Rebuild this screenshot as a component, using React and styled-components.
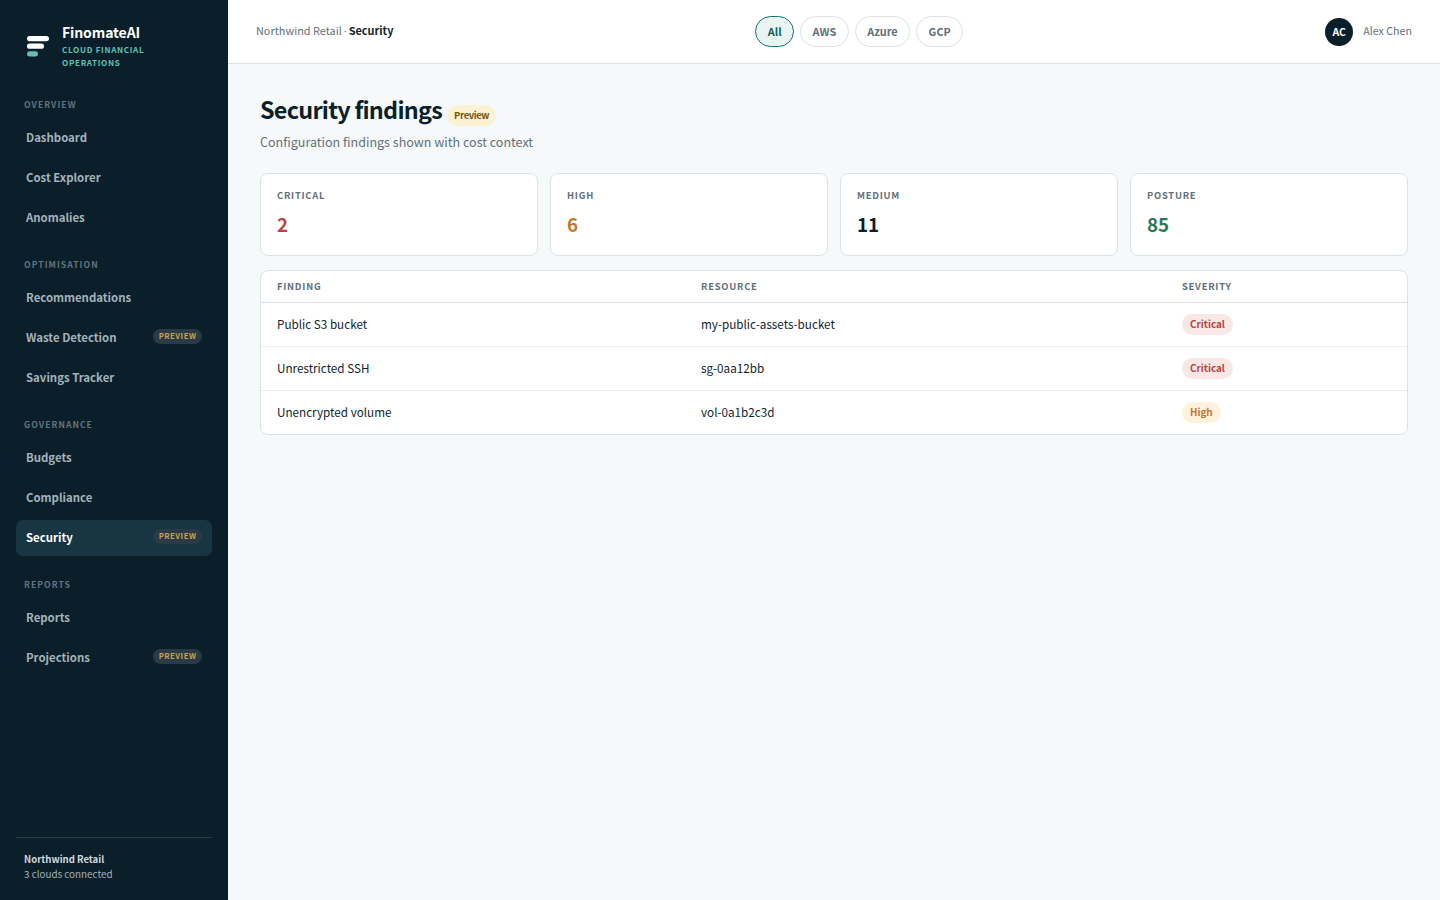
import React from "react";
import styled, { createGlobalStyle } from "styled-components";

const FONT = `"Noto Sans CJK SC", "Noto Sans", sans-serif`;

const GlobalStyle = createGlobalStyle`
  html, body {
    margin: 0;
    padding: 0;
    height: 100%;
    background: #f6f9fa;
    font-family: ${FONT};
  }
  * {
    box-sizing: border-box;
  }
`;

const Shell = styled.div`
  display: flex;
  width: 100%;
  height: 100vh;
  overflow: hidden;
`;

const Sidebar = styled.aside`
  width: 228px;
  flex: none;
  background: #0b1f2a;
  display: flex;
  flex-direction: column;
  padding: 0 16px;
`;

const Brand = styled.div`
  display: flex;
  align-items: center;
  gap: 12px;
  padding: 14px 0 0 10px;
  height: 78px;
`;

const BrandName = styled.div`
  font-size: 14px;
  line-height: 18px;
  font-weight: 700;
  letter-spacing: -0.1px;
  color: #ffffff;
`;

const BrandTag = styled.div`
  margin-top: 2px;
  font-size: 8.1px;
  line-height: 13px;
  font-weight: 700;
  letter-spacing: 0.68px;
  color: #5ec4b4;
  width: 110px;
`;

const Nav = styled.nav`
  flex: 1;
`;

const SectionLabel = styled.div`
  height: 16px;
  margin: ${({ $first }) => ($first ? "18px" : "20px")} 0 8px 8px;
  font-size: 8.6px;
  line-height: 16px;
  font-weight: 700;
  letter-spacing: 1.05px;
  color: #62757f;
`;

const NavItem = styled.a`
  display: flex;
  align-items: center;
  justify-content: space-between;
  height: 36px;
  margin-bottom: 4px;
  padding: 0 10px 2px;
  border-radius: 7px;
  font-size: 11.4px;
  font-weight: 700;
  color: ${({ $active }) => ($active ? "#ffffff" : "#a3b3bb")};
  background: ${({ $active }) => ($active ? "#173543" : "transparent")};
`;

const NavPreview = styled.span`
  height: 15px;
  margin-bottom: 1px;
  padding: 0 5.5px;
  border-radius: 8px;
  background: #2a3b45;
  font-size: 7.65px;
  line-height: 14px;
  font-weight: 700;
  letter-spacing: 0.55px;
  color: #c9a352;
`;

const Footer = styled.div`
  border-top: 1px solid #2b3c46;
  padding: 14px 8px 18px;
  font-size: 9.85px;
  line-height: 15px;
  color: #a3b3bb;
`;

const FooterName = styled.div`
  font-size: 9.55px;
  font-weight: 700;
  color: #cfd9dd;
`;

const Main = styled.div`
  flex: 1;
  min-width: 0;
  display: flex;
  flex-direction: column;
`;

const Topbar = styled.header`
  height: 64px;
  flex: none;
  display: flex;
  justify-content: space-between;
  align-items: center;
  padding: 0 28px;
  background: #ffffff;
  border-bottom: 1px solid #d9e3e5;
`;

const Breadcrumb = styled.div`
  padding-bottom: 3px;
  font-size: 10.9px;
  color: #5f717b;

  strong {
    font-weight: 700;
    color: #0f2430;
  }
`;

const Dot = styled.span`
  margin: 0 2px;
  font-family: "Noto Sans", sans-serif;
`;

const Pills = styled.div`
  display: flex;
  gap: 6px;
`;

const Pill = styled.button`
  height: 31px;
  padding: 0 11.5px 2px;
  border-radius: 16px;
  border: 1px solid ${({ $active }) => ($active ? "#0f766e" : "#d9e3e5")};
  background: ${({ $active }) => ($active ? "#e9f4f2" : "#ffffff")};
  color: ${({ $active }) => ($active ? "#0f5f5a" : "#5f717b")};
  font-family: ${FONT};
  font-size: 10.9px;
  font-weight: 700;
`;

const User = styled.div`
  display: flex;
  align-items: center;
  justify-content: flex-end;
  gap: 10px;
  font-size: 10.7px;
  color: #5f717b;
`;

const UserName = styled.span`
  margin-bottom: 2px;
`;

const Avatar = styled.div`
  width: 28px;
  height: 28px;
  padding-bottom: 1px;
  border-radius: 50%;
  background: #0b1f2a;
  display: flex;
  align-items: center;
  justify-content: center;
  color: #ffffff;
  font-size: 10.5px;
  font-weight: 700;
`;

const Content = styled.main`
  flex: 1;
  padding: 28px 32px;
`;

const TitleRow = styled.div`
  display: flex;
  align-items: center;
  gap: 5px;
`;

const Title = styled.h1`
  margin: 0;
  font-size: 23.4px;
  line-height: 34px;
  font-weight: 700;
  letter-spacing: -0.75px;
  color: #0b1f2a;
`;

const TitleBadge = styled.span`
  margin-top: 13px;
  height: 21px;
  padding: 0 7px;
  border-radius: 11px;
  background: #fdf1d3;
  font-size: 9.5px;
  line-height: 20px;
  font-weight: 700;
  letter-spacing: -0.4px;
  color: #7a5310;
`;

const Subtitle = styled.p`
  margin: 6px 0 0;
  font-size: 12.54px;
  line-height: 20px;
  color: #5f717b;
`;

const Cards = styled.section`
  display: grid;
  grid-template-columns: repeat(4, 1fr);
  gap: 12px;
  margin-top: 21px;
`;

const Card = styled.div`
  height: 83px;
  padding: 14px 16px;
  background: #ffffff;
  border: 1px solid #d9e3e5;
  border-radius: 8px;
`;

const CardLabel = styled.div`
  font-size: 9.4px;
  line-height: 14px;
  font-weight: 700;
  letter-spacing: 0.75px;
  color: #5f717b;
`;

const CardValue = styled.div`
  margin-top: 7px;
  font-size: 18.8px;
  line-height: 30px;
  font-weight: 700;
  color: ${({ $color }) => $color};
`;

const TableWrap = styled.div`
  margin-top: 14px;
  background: #ffffff;
  border: 1px solid #d9e3e5;
  border-radius: 8px;
  overflow: hidden;
`;

const Row = styled.div`
  display: grid;
  grid-template-columns: 424px 481px 1fr;
  align-items: center;
  height: ${({ $head }) => ($head ? "32px" : "44px")};
  padding: 0 16px 2px;
  border-bottom: 1px solid ${({ $head }) => ($head ? "#d9e3e5" : "#e8eff0")};
  font-size: 11.7px;
  color: #0f2430;

  &:last-child {
    height: 43px;
    border-bottom: 0;
  }
`;

const HeadCell = styled.div`
  font-size: 9.4px;
  font-weight: 700;
  letter-spacing: 0.75px;
  color: #5f717b;
`;

const SeverityCell = styled.div`
  margin-top: 2px;
`;

const Severity = styled.span`
  display: inline-block;
  height: 21px;
  padding: 0 8px;
  border-radius: 11px;
  font-size: 9.9px;
  line-height: 21px;
  font-weight: 700;
  background: ${({ $level }) => ($level === "Critical" ? "#f8e7e5" : "#fef1dd")};
  color: ${({ $level }) => ($level === "Critical" ? "#b84545" : "#c4762a")};
`;

const sections = [
  { label: "OVERVIEW", items: [{ name: "Dashboard" }, { name: "Cost Explorer" }, { name: "Anomalies" }] },
  {
    label: "OPTIMISATION",
    items: [{ name: "Recommendations" }, { name: "Waste Detection", preview: true }, { name: "Savings Tracker" }],
  },
  {
    label: "GOVERNANCE",
    items: [{ name: "Budgets" }, { name: "Compliance" }, { name: "Security", preview: true, active: true }],
  },
  { label: "REPORTS", items: [{ name: "Reports" }, { name: "Projections", preview: true }] },
];

const stats = [
  { label: "CRITICAL", value: "2", color: "#b84545" },
  { label: "HIGH", value: "6", color: "#c4762a" },
  { label: "MEDIUM", value: "11", color: "#0b1f2a" },
  { label: "POSTURE", value: "85", color: "#2a7a5a" },
];

const findings = [
  { finding: "Public S3 bucket", resource: "my-public-assets-bucket", severity: "Critical" },
  { finding: "Unrestricted SSH", resource: "sg-0aa12bb", severity: "Critical" },
  { finding: "Unencrypted volume", resource: "vol-0a1b2c3d", severity: "High" },
];

const Logo = () => (
  <svg width="24" height="22" viewBox="0 0 24 22" fill="none">
    <rect x="1" y="1" width="22" height="5.2" rx="2.6" fill="#ffffff" />
    <rect x="1" y="8.6" width="17" height="5.2" rx="2.6" fill="#ffffff" />
    <rect x="1" y="16.2" width="11" height="5.2" rx="2.6" fill="#66bfae" />
  </svg>
);

export default function App() {
  return (
    <>
      <GlobalStyle />
      <Shell>
        <Sidebar>
          <Brand>
            <Logo />
            <div>
              <BrandName>FinomateAI</BrandName>
              <BrandTag>CLOUD FINANCIAL OPERATIONS</BrandTag>
            </div>
          </Brand>
          <Nav>
            {sections.map((section, index) => (
              <div key={section.label}>
                <SectionLabel $first={index === 0}>{section.label}</SectionLabel>
                {section.items.map((item) => (
                  <NavItem key={item.name} $active={item.active}>
                    {item.name}
                    {item.preview && <NavPreview>PREVIEW</NavPreview>}
                  </NavItem>
                ))}
              </div>
            ))}
          </Nav>
          <Footer>
            <FooterName>Northwind Retail</FooterName>
            3 clouds connected
          </Footer>
        </Sidebar>
        <Main>
          <Topbar>
            <Breadcrumb>
              Northwind Retail<Dot>·</Dot>
              <strong>Security</strong>
            </Breadcrumb>
            <Pills>
              <Pill $active>All</Pill>
              <Pill>AWS</Pill>
              <Pill>Azure</Pill>
              <Pill>GCP</Pill>
            </Pills>
            <User>
              <Avatar>AC</Avatar>
              <UserName>Alex Chen</UserName>
            </User>
          </Topbar>
          <Content>
            <TitleRow>
              <Title>Security findings</Title>
              <TitleBadge>Preview</TitleBadge>
            </TitleRow>
            <Subtitle>Configuration findings shown with cost context</Subtitle>
            <Cards>
              {stats.map((stat) => (
                <Card key={stat.label}>
                  <CardLabel>{stat.label}</CardLabel>
                  <CardValue $color={stat.color}>{stat.value}</CardValue>
                </Card>
              ))}
            </Cards>
            <TableWrap>
              <Row $head>
                <HeadCell>FINDING</HeadCell>
                <HeadCell>RESOURCE</HeadCell>
                <HeadCell>SEVERITY</HeadCell>
              </Row>
              {findings.map((row) => (
                <Row key={row.finding}>
                  <div>{row.finding}</div>
                  <div>{row.resource}</div>
                  <SeverityCell>
                    <Severity $level={row.severity}>{row.severity}</Severity>
                  </SeverityCell>
                </Row>
              ))}
            </TableWrap>
          </Content>
        </Main>
      </Shell>
    </>
  );
}
